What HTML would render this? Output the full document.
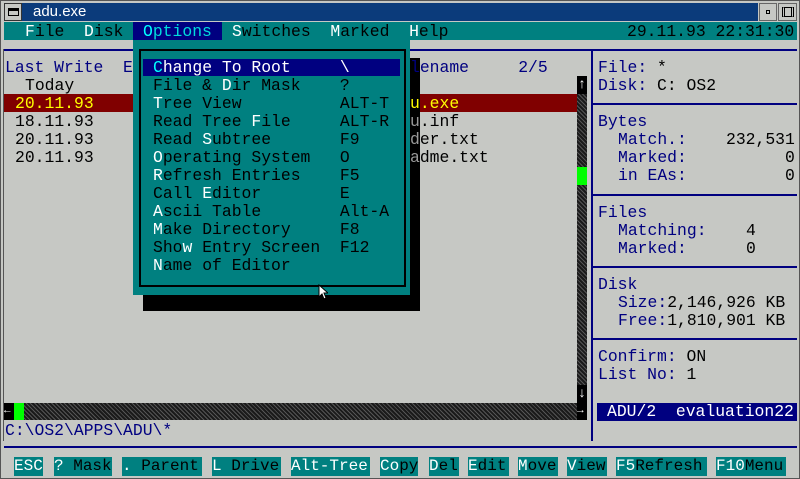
<!DOCTYPE html>
<html><head><meta charset="utf-8"><style>
*{margin:0;padding:0;box-sizing:border-box}
body{width:800px;height:479px;overflow:hidden;background:#c6c8c4;position:relative;font-family:"Liberation Mono",monospace;font-size:16.4px;line-height:18px}
.t{position:absolute;white-space:pre;height:18px;margin-top:1px}
.b{position:absolute}
.n{color:#000080}.k{color:#000}.w{color:#fff}.y{color:#ffff00}.c{color:#00ffff}.g{color:#e0e0e0}
.fk{position:absolute;top:457px;height:19px;background:#008080;color:#000;white-space:pre;line-height:19px;font-size:16px;overflow:hidden}
.sb{background-color:#1a1a1a;background-image:repeating-linear-gradient(45deg,#555 0 1px,transparent 1px 3px)}
</style></head><body>
<div class="b" style="left:0;top:0;width:800px;height:479px;border:1px solid #555"></div>
<div class="b" style="top:3px;left:4px;width:18px;height:18px;background:#c6c8c4;border:1px solid #333"></div>
<div class="b" style="left:8px;top:8px;width:11px;height:8px;border:1px solid #000;border-top:3px solid #000"></div>
<div class="b" style="left:22px;top:3px;width:736px;height:18px;background:#0b3b7b"></div>
<div class="t" style="left:33px;top:2px;color:#fff;font-family:'Liberation Sans',sans-serif;font-size:15px">adu.exe</div>
<div class="b" style="left:759px;top:3px;width:18px;height:18px;background:#c6c8c4;border:1px solid #666"></div>
<div class="b" style="left:766px;top:10px;width:4px;height:4px;border:1px solid #000"></div>
<div class="b" style="left:778px;top:3px;width:19px;height:18px;background:#c6c8c4;border:1px solid #666"></div>
<div class="b" style="left:782px;top:7px;width:12px;height:10px;border:1px solid #000;border-left:3px double #000;border-right:3px double #000"></div>
<div class="b" style="left:4px;top:22px;width:793px;height:18px;background:#008080"></div>
<div class="t k" style="left:25px;top:22px"><span class="w">F</span>ile  <span class="w">D</span>isk</div>
<div class="b" style="left:133px;top:22px;width:89px;height:18px;background:#000080"></div>
<div class="t c" style="left:143px;top:22px">O<span style="color:#00dcdc">ptions</span></div>
<div class="t k" style="left:232px;top:22px"><span class="w">S</span>witches  <span class="w">M</span>arked  <span class="w">H</span>elp</div>
<div class="t k" style="left:627px;top:22px">29.11.93 22:31:30</div>
<div class="b" style="left:4px;top:49px;width:793px;height:2px;background:#000080"></div>
<div class="b" style="left:591px;top:49px;width:2px;height:392px;background:#000080"></div>
<div class="b" style="left:3px;top:49px;width:1px;height:392px;background:#555"></div>
<div class="b" style="left:4px;top:446px;width:793px;height:2px;background:#000080"></div>
<div class="t n" style="left:5px;top:58px">Last Write  E</div>
<div class="t n" style="left:410px;top:58px">lename     2/5</div>
<div class="t k" style="left:25px;top:76px">Today</div>
<div class="b" style="left:4px;top:94px;width:573px;height:18px;background:#800000"></div>
<div class="t y" style="left:15px;top:94px">20.11.93</div>
<div class="t y" style="left:410px;top:94px">u.exe</div>
<div class="t k" style="left:15px;top:112px">18.11.93</div>
<div class="t k" style="left:15px;top:130px">20.11.93</div>
<div class="t k" style="left:15px;top:148px">20.11.93</div>
<div class="t k" style="left:410px;top:112px">u.inf</div>
<div class="t k" style="left:410px;top:130px">der.txt</div>
<div class="t k" style="left:410px;top:148px">adme.txt</div>
<div class="b sb" style="left:577px;top:76px;width:10px;height:327px"></div>
<div class="b" style="left:577px;top:76px;width:10px;height:18px;background:#000;color:#fff;font-size:14px;line-height:18px;text-align:center">↑</div>
<div class="b" style="left:577px;top:167px;width:10px;height:18px;background:#00ff00"></div>
<div class="b" style="left:577px;top:385px;width:10px;height:18px;background:#000;color:#fff;font-size:14px;line-height:18px;text-align:center">↓</div>
<div class="b sb" style="left:4px;top:403px;width:583px;height:17px"></div>
<div class="b" style="left:4px;top:403px;width:10px;height:17px;background:#000;color:#fff;font-size:11px;line-height:17px">←</div>
<div class="b" style="left:14px;top:403px;width:10px;height:17px;background:#00ff00"></div>
<div class="b" style="left:577px;top:403px;width:10px;height:17px;background:#000;color:#fff;font-size:11px;line-height:17px">→</div>
<div class="t n" style="left:5px;top:421px">C:\OS2\APPS\ADU\*</div>
<div class="b" style="left:143px;top:58px;width:277px;height:253px;background:#000"></div>
<div class="t" style="left:410px;top:58px;color:#000080">l</div>
<div class="t" style="left:410px;top:94px;color:#ffff00">u</div>
<div class="t" style="left:410px;top:112px;color:#999">u</div>
<div class="t" style="left:410px;top:130px;color:#999">d</div>
<div class="t" style="left:410px;top:148px;color:#999">a</div>
<div class="b" style="left:133px;top:40px;width:277px;height:255px;background:#008080"></div>
<div class="b" style="left:139px;top:49px;width:267px;height:238px;border:2px solid #000"></div>
<div class="b" style="left:143px;top:59px;width:257px;height:17px;background:#000080"></div>
<div class="t k" style="left:153px;top:58px;color:#fff"><span class="c">C</span>hange To Root     \</div>
<div class="t k" style="left:153px;top:76px">File &amp; <span class="w">D</span>ir Mask    ?</div>
<div class="t k" style="left:153px;top:94px"><span class="w">T</span>ree View          ALT-T</div>
<div class="t k" style="left:153px;top:112px">Read Tree <span class="w">F</span>ile     ALT-R</div>
<div class="t k" style="left:153px;top:130px">Read <span class="w">S</span>ubtree       F9</div>
<div class="t k" style="left:153px;top:148px"><span class="w">O</span>perating System   O</div>
<div class="t k" style="left:153px;top:166px"><span class="w">R</span>efresh Entries    F5</div>
<div class="t k" style="left:153px;top:184px">Call <span class="w">E</span>ditor        E</div>
<div class="t k" style="left:153px;top:202px"><span class="w">A</span>scii Table        Alt-A</div>
<div class="t k" style="left:153px;top:220px"><span class="w">M</span>ake Directory     F8</div>
<div class="t k" style="left:153px;top:238px">Sho<span class="w">w</span> Entry Screen  F12</div>
<div class="t k" style="left:153px;top:256px"><span class="w">N</span>ame of Editor</div>
<svg class="b" style="left:318px;top:284px" width="10" height="16" viewBox="0 0 10 16"><path d="M1 1V13L4 10L6 15L8 14L6 9H10Z" fill="#fff" stroke="#000" stroke-width="1"/></svg>
<div class="t n" style="left:598px;top:58px">File: <span class="k">*</span></div>
<div class="t n" style="left:598px;top:76px">Disk: <span class="k">C: OS2</span></div>
<div class="b" style="left:593px;top:103px;width:204px;height:2px;background:#000080"></div>
<div class="t n" style="left:598px;top:112px">Bytes</div>
<div class="t n" style="left:618px;top:130px">Match.:</div><div class="t k" style="left:726px;top:130px">232,531</div>
<div class="t n" style="left:618px;top:148px">Marked:</div><div class="t k" style="left:785px;top:148px">0</div>
<div class="t n" style="left:618px;top:166px">in EAs:</div><div class="t k" style="left:785px;top:166px">0</div>
<div class="b" style="left:593px;top:194px;width:204px;height:2px;background:#000080"></div>
<div class="t n" style="left:598px;top:203px">Files</div>
<div class="t n" style="left:618px;top:221px">Matching:</div><div class="t k" style="left:746px;top:221px">4</div>
<div class="t n" style="left:618px;top:239px">Marked:</div><div class="t k" style="left:746px;top:239px">0</div>
<div class="b" style="left:593px;top:266px;width:204px;height:2px;background:#000080"></div>
<div class="t n" style="left:598px;top:275px">Disk</div>
<div class="t n" style="left:618px;top:293px">Size:<span class="k">2,146,926 KB</span></div>
<div class="t n" style="left:618px;top:311px">Free:<span class="k">1,810,901 KB</span></div>
<div class="b" style="left:593px;top:338px;width:204px;height:2px;background:#000080"></div>
<div class="t n" style="left:598px;top:347px">Confirm: <span class="k">ON</span></div>
<div class="t n" style="left:598px;top:365px">List No: <span class="k">1</span></div>
<div class="b" style="left:597px;top:403px;width:200px;height:18px;background:#000080"></div>
<div class="t" style="left:607px;top:402px;color:#fff">ADU/2  evaluation22</div>
<div class="fk" style="left:14px;width:29px"><span class="w">ESC</span></div>
<div class="fk" style="left:54px;width:58px"><span class="w">?</span> Mask</div>
<div class="fk" style="left:122px;width:80px"><span class="w">.</span> Parent</div>
<div class="fk" style="left:212px;width:69px"><span class="w">L</span> Drive</div>
<div class="fk" style="left:291px;width:79px"><span class="w">Alt-Tree</span></div>
<div class="fk" style="left:380px;width:38px"><span class="w">Co</span>py</div>
<div class="fk" style="left:429px;width:30px"><span class="w">D</span>el</div>
<div class="fk" style="left:468px;width:41px"><span class="w">E</span>dit</div>
<div class="fk" style="left:518px;width:40px"><span class="w">M</span>ove</div>
<div class="fk" style="left:567px;width:40px"><span class="w">V</span>iew</div>
<div class="fk" style="left:616px;width:91px"><span class="w">F5</span>Refresh</div>
<div class="fk" style="left:716px;width:70px"><span class="w">F10</span>Menu</div>
</body></html>
